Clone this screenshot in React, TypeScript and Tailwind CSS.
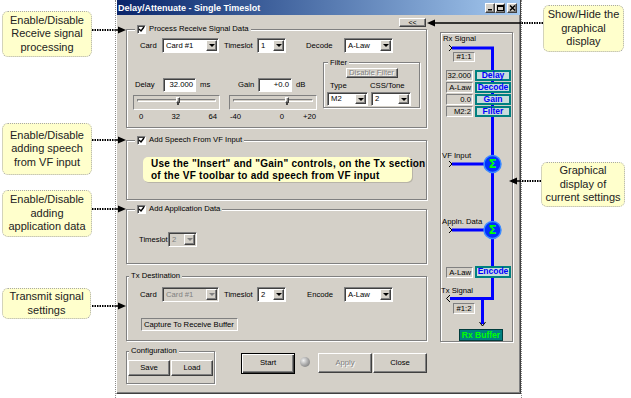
import React from "react";

// classic win2k bevels
const sunken = "border border-t-[#808080] border-l-[#808080] border-b-white border-r-white shadow-[inset_1px_1px_0_#404040]";
const raised = "border border-t-white border-l-white border-b-[#404040] border-r-[#404040] shadow-[inset_-1px_-1px_0_#808080]";
const etched = "border border-[#808080] shadow-[inset_1px_1px_0_#fff,1px_1px_0_#fff]";
const flat = "border border-t-[#808080] border-l-[#808080] border-b-white border-r-white";
const dis = "text-[#808080] [text-shadow:1px_1px_0_#fff]";

function Check() {
  return (
    <span className={`inline-flex w-[9px] h-[9px] bg-white ${sunken} items-center justify-center shrink-0`}>
      <svg width="7" height="7" viewBox="0 0 7 7">
        <path d="M1 3 L3 5 L6 1" fill="none" stroke="#000" strokeWidth="1.4" />
      </svg>
    </span>
  );
}

interface SelectProps {
  value: string;
  w: string;
  h?: string;
  disabled?: boolean;
}

function Select({ value, w, h = "h-[15px]", disabled = false }: SelectProps) {
  return (
    <div className={`flex ${w} ${h} ${sunken} ${disabled ? "bg-[#d4d0c8]" : "bg-white"} p-[1px] shrink-0`}>
      <span className={`flex-1 pl-[2px] flex items-center whitespace-nowrap ${disabled ? "text-[#808080]" : ""}`}>
        {value}
      </span>
      <span className={`w-[11px] flex items-center justify-center bg-[#d4d0c8] ${raised}`}>
        <span
          className={`w-0 h-0 border-x-[3px] border-x-transparent border-t-[3px] ${
            disabled ? "border-t-[#808080]" : "border-t-black"
          }`}
        />
      </span>
    </div>
  );
}

function Slider({ pos }: { pos: number }) {
  return (
    <div className={`relative h-[15px] mt-[3px] ${flat}`}>
      <div className="mx-[3px] mt-[3px] h-[3px] border-t border-l border-[#808080] border-b border-b-white border-r border-r-white bg-[#d4d0c8]" />
      {/* thumb */}
      <div className="absolute top-[1px] w-[4px] h-[8px]" style={{ left: pos - 3 }}>
        <div className={`w-[4px] h-[6px] bg-[#d4d0c8] ${raised}`} />
        <div className="ml-[1px] w-[2px] h-[2px] bg-[#404040]" />
      </div>
    </div>
  );
}

interface GroupProps {
  legend: string;
  check?: boolean;
  legendMl?: string;
  className?: string;
  children?: React.ReactNode;
}

function Group({ legend, check = false, legendMl = "ml-[8px]", className = "", children }: GroupProps) {
  return (
    <fieldset className={`${etched} ${className}`}>
      <legend className={`${legendMl} px-[2px] h-[10px] flex items-center gap-[3px] bg-[#d4d0c8]`}>
        {check && <Check />}
        <span className="leading-[10px] whitespace-nowrap">{legend}</span>
      </legend>
      {children}
    </fieldset>
  );
}

function TitleButton({ kind, className = "" }: { kind: "min" | "max" | "close"; className?: string }) {
  return (
    <span className={`w-[10px] h-[10px] bg-[#d4d0c8] ${raised} flex items-center justify-center ${className}`}>
      <svg width="7" height="6" viewBox="0 0 7 6">
        {kind === "min" && <rect x="1" y="4" width="4" height="1.5" fill="#000" />}
        {kind === "max" && (
          <>
            <rect x="0.5" y="0.5" width="6" height="5" fill="none" stroke="#000" strokeWidth="1" />
            <rect x="0.5" y="0.5" width="6" height="1.5" fill="#000" />
          </>
        )}
        {kind === "close" && <path d="M1 0.5 L6 5.5 M6 0.5 L1 5.5" stroke="#000" strokeWidth="1.5" />}
      </svg>
    </span>
  );
}

function Diagram() {
  const valBox = `absolute left-[5px] w-[27px] h-[11px] ${flat} text-right pr-[1px] leading-[9px]`;
  const lblBox =
    "absolute left-[34px] w-[36px] h-[11px] border-2 border-[#008080] bg-[#c8dcdc] text-[#0000ff] font-bold text-[8.5px] leading-[7px] text-center";
  return (
    <div className={`relative w-[73px] h-[310px] ${etched}`}>
      <svg className="absolute left-0 top-0" width="71" height="308" viewBox="0 0 71 308">
        <path d="M11 15 H51.5 V265.5 H9" fill="none" stroke="#0000ff" strokeWidth="3" />
        <path d="M41.5 265.5 V291" fill="none" stroke="#0000ff" strokeWidth="3" />
        <path d="M11 131 H51.5 M11 197 H51.5" fill="none" stroke="#0000ff" strokeWidth="3" />
        <path
          d="M8 12 L11 15 L8 18 M8 128 L11 131 L8 134 M8 194 L11 197 L8 200 M9 262 L5.5 265.5 L9 269 M38.5 289 L41.5 293 L44.5 289"
          fill="none"
          stroke="#000"
          strokeWidth="1"
        />
        {[131, 197].map((cy) => (
          <g key={cy}>
            <circle cx="51.5" cy={cy} r="8.5" fill="#0030ff" stroke="#3c8cff" strokeWidth="1.5" />
            <text x="51.5" y={cy + 4} textAnchor="middle" fontSize="12" fontWeight="bold" fill="#00ff00" fontFamily="'DejaVu Sans', sans-serif">
              Σ
            </text>
          </g>
        ))}
      </svg>
      <span className="absolute left-[2px] top-[1px] leading-[10px]">Rx Signal</span>
      <span className={`absolute left-[12px] top-[19px] w-[22px] h-[10px] ${flat} text-center leading-[8px]`}>#1:1</span>
      <span className={`${valBox} top-[37px]`}>32.000</span>
      <span className={`${valBox} top-[49px]`}>A-Law</span>
      <span className={`${valBox} top-[61px]`}>0.0</span>
      <span className={`${valBox} top-[73px]`}>M2:2</span>
      <span className={`${lblBox} top-[37px]`}>Delay</span>
      <span className={`${lblBox} top-[49px]`}>Decode</span>
      <span className={`${lblBox} top-[61px]`}>Gain</span>
      <span className={`${lblBox} top-[73px]`}>Filter</span>
      <span className="absolute left-[1px] top-[118px] leading-[10px] whitespace-nowrap">VF Input</span>
      <span className="absolute left-[1px] top-[184px] leading-[10px] whitespace-nowrap">Appln. Data</span>
      <span className={`${valBox} top-[234px]`}>A-Law</span>
      <span className={`${lblBox} top-[233px] h-[12px]`}>Encode</span>
      <span className="absolute left-[0px] top-[253px] leading-[10px] whitespace-nowrap">Tx Signal</span>
      <span className={`absolute left-[12px] top-[270px] w-[22px] h-[11px] ${flat} text-center leading-[9px]`}>#1:2</span>
      <span className="absolute left-[18px] top-[296px] w-[44px] h-[12px] bg-[#008080] border border-[#003c3c] text-[#00ff00] font-bold text-[8.5px] leading-[10px] text-center">
        Rx Buffer
      </span>
    </div>
  );
}

function Dialog() {
  return (
    <div className="w-[405px] h-[394px] bg-[#d4d0c8] border-l border-l-white border-r border-r-[#404040] border-b border-b-[#404040] shadow-[inset_-1px_-1px_0_#808080] text-[7.7px] leading-[10px]">
      {/* title bar */}
      <div className="h-[15px] flex items-center bg-linear-to-r from-[#0a246a] to-[#a6caf0] pl-[1px] pr-[3px]">
        <span className="text-white font-bold text-[9px] whitespace-nowrap">Delay/Attenuate - Single Timeslot</span>
        <div className="ml-auto flex">
          <TitleButton kind="min" />
          <TitleButton kind="max" />
          <TitleButton kind="close" className="ml-[2px]" />
        </div>
      </div>

      <div className="flex pl-[9px]">
        {/* left column */}
        <div className="w-[301px] flex flex-col">
          <div className="flex justify-end mt-[3px] pr-[1px]">
            <div className={`w-[27px] h-[9px] ${raised} text-[7px] leading-[7px] text-center`}>&lt;&lt;</div>
          </div>

          <Group legend="Process Receive Signal Data" check className="-mt-[3px] h-[104px]">
            <div className="flex items-center mt-[4px] pl-[13px] h-[15px]">
              <span className="w-[22px]">Card</span>
              <Select value="Card #1" w="w-[57px]" />
              <span className="ml-[5px] w-[33px]">Timeslot</span>
              <Select value="1" w="w-[29px]" />
              <span className="ml-[20px] w-[38px]">Decode</span>
              <Select value="A-Law" w="w-[49px]" />
            </div>
            <div className="flex items-start mt-[5px] pl-[6px]">
              <div className="w-[87px] mt-[20px] shrink-0">
                <div className="flex items-center h-[14px]">
                  <span className="w-[30px] pl-[2px]">Delay</span>
                  <div className={`w-[33px] h-[14px] bg-white ${sunken} text-right pr-[2px] leading-[12px]`}>32.000</div>
                  <span className="ml-[4px]">ms</span>
                </div>
                <Slider pos={45} />
                <div className="flex justify-between pl-[6px] pr-[3px] mt-[2px]">
                  <span>0</span>
                  <span>32</span>
                  <span>64</span>
                </div>
              </div>
              <div className="w-[88px] ml-[9px] mt-[20px] shrink-0">
                <div className="flex items-center h-[14px]">
                  <span className="w-[29px] pl-[9px]">Gain</span>
                  <div className={`w-[34px] h-[14px] bg-white ${sunken} text-right pr-[2px] leading-[12px]`}>+0.0</div>
                  <span className="ml-[4px]">dB</span>
                </div>
                <Slider pos={58} />
                <div className="flex pl-[1px] pr-[1px] mt-[2px]">
                  <span>-40</span>
                  <span className="ml-auto mr-[19px]">0</span>
                  <span>+20</span>
                </div>
              </div>
              <fieldset className={`${etched} w-[97px] h-[50px] ml-[6px] shrink-0`}>
                <legend className="ml-[4px] px-[2px] h-[9px] leading-[9px] bg-[#d4d0c8]">Filter</legend>
                <div className={`mx-auto mt-[1px] w-[52px] h-[10px] ${raised} ${dis} text-center leading-[8px] whitespace-nowrap`}>
                  Disable Filter
                </div>
                <div className="flex mt-[3px] leading-[9px] pl-[6px]">
                  <span className="w-[40px]">Type</span>
                  <span>CSS/Tone</span>
                </div>
                <div className="flex mt-[2px] pl-[3px] gap-[3px]">
                  <Select value="M2" w="w-[41px]" h="h-[14px]" />
                  <Select value="2" w="w-[40px]" h="h-[14px]" />
                </div>
              </fieldset>
            </div>
          </Group>

          <Group legend="Add Speech From VF Input" check className="mt-[7px] h-[65px]">
            <div className="mt-[12px] ml-[16px] w-[269px] h-[25px] rounded-[5px] bg-[#ffffcc] shadow-[1px_1px_0_#b8b4a8] pl-[8px] py-[1px] font-bold text-[10px] leading-[12px] tracking-[0.25px] whitespace-nowrap">
              Use the "Insert" and "Gain" controls, on the Tx section
              <br />
              of the VF toolbar to add speech from VF input
            </div>
          </Group>

          <Group legend="Add Application Data" check className="mt-[4px] h-[60px]">
            <div className="flex items-center mt-[18px] pl-[12px]">
              <span className="w-[29px]">Timeslot</span>
              <Select value="2" w="w-[29px]" disabled />
            </div>
          </Group>

          <Group legend="Tx Destination" legendMl="ml-[2px]" className="mt-[7px] h-[70px]">
            <div className="flex items-center mt-[6px] pl-[13px] h-[15px]">
              <span className="w-[22px]">Card</span>
              <Select value="Card #1" w="w-[57px]" disabled />
              <span className="ml-[5px] w-[33px]">Timeslot</span>
              <Select value="2" w="w-[29px]" />
              <span className="ml-[21px] w-[37px]">Encode</span>
              <Select value="A-Law" w="w-[49px]" />
            </div>
            <div className={`mt-[16px] ml-[14px] w-[97px] h-[13px] ${flat} pl-[2px] leading-[11px] whitespace-nowrap`}>
              Capture To Receive Buffer
            </div>
          </Group>

          <div className="flex items-start mt-[5px]">
            <Group legend="Configuration" legendMl="ml-[2px]" className="w-[89px] h-[38px] shrink-0">
              <div className="flex mt-[4px] pl-[1px] gap-[1px]">
                <div className={`w-[42px] h-[16px] ${raised} text-center leading-[14px]`}>Save</div>
                <div className={`w-[42px] h-[16px] ${raised} text-center leading-[14px]`}>Load</div>
              </div>
            </Group>
            <div className="ml-[26px] mt-[7px] w-[54px] h-[21px] border border-black shadow-[inset_1px_1px_0_#fff,inset_-1px_-1px_0_#404040,inset_-2px_-2px_0_#808080] text-center leading-[18px]">
              Start
            </div>
            <div className="ml-[5px] mt-[11px] w-[10px] h-[10px] rounded-full bg-[radial-gradient(circle_at_35%_35%,#f0f0f0,#a0a0a0_55%,#707070)]" />
            <div className={`ml-[8px] mt-[7px] w-[54px] h-[20px] ${raised} ${dis} text-center leading-[18px]`}>Apply</div>
            <div className={`ml-[1px] mt-[7px] w-[54px] h-[20px] ${raised} text-center leading-[18px]`}>Close</div>
          </div>
        </div>

        {/* graphical display */}
        <div className="ml-[13px] mt-[17px]">
          <Diagram />
        </div>
      </div>
    </div>
  );
}

const callout =
  "absolute flex items-center justify-center text-center text-[11px] leading-[13.5px] text-[#222] bg-[#ffffcc] border border-dotted border-[#a8a8a8] rounded-[6px]";

export default function App() {
  const left = [30, 140, 209, 306];
  return (
    <div className="relative w-[631px] h-[398px] bg-white overflow-hidden font-['Liberation_Sans',Arial,sans-serif] text-black">
      <div className="ml-[115px] w-[407px] h-[398px] border-x border-dotted border-[#8a8a8a]">
        <Dialog />
      </div>

      <div className={`${callout} left-[2px] top-[11px] w-[90px] h-[46px]`}>
        Enable/Disable
        <br />
        Receive signal
        <br />
        processing
      </div>
      <div className={`${callout} left-[2px] top-[123px] w-[90px] h-[52px]`}>
        Enable/Disable
        <br />
        adding speech
        <br />
        from VF input
      </div>
      <div className={`${callout} left-[2px] top-[190px] w-[90px] h-[47px]`}>
        Enable/Disable
        <br />
        adding
        <br />
        application data
      </div>
      <div className={`${callout} left-[2px] top-[288px] w-[89px] h-[31px]`}>
        Transmit signal
        <br />
        settings
      </div>
      <div className={`${callout} left-[543px] top-[5px] w-[81px] h-[47px]`}>
        Show/Hide the
        <br />
        graphical
        <br />
        display
      </div>
      <div className={`${callout} left-[541px] top-[162px] w-[84px] h-[45px]`}>
        Graphical
        <br />
        display of
        <br />
        current settings
      </div>

      {/* callout arrows */}
      <svg className="absolute left-0 top-0 pointer-events-none" width="631" height="398" viewBox="0 0 631 398">
        {left.map((y) => (
          <g key={y}>
            <line x1="92" y1={y} x2="115" y2={y} stroke="#000" strokeWidth="2" strokeDasharray="1.5 1" />
            <line x1="115" y1={y} x2="120" y2={y} stroke="#000" strokeWidth="1.5" />
            <polygon points={`126,${y} 118,${y - 3.5} 118,${y + 3.5}`} fill="#000" />
          </g>
        ))}
        <line x1="543" y1="23" x2="521" y2="23" stroke="#000" strokeWidth="2" strokeDasharray="1.5 1" />
        <line x1="521" y1="23" x2="433" y2="23" stroke="#000" strokeWidth="1.5" />
        <polygon points="427,23 435,19.5 435,26.5" fill="#000" />
        <line x1="541" y1="181" x2="521" y2="181" stroke="#000" strokeWidth="2" strokeDasharray="1.5 1" />
        <line x1="521" y1="181" x2="516" y2="181" stroke="#000" strokeWidth="1.5" />
        <polygon points="509,181 517,177.5 517,184.5" fill="#000" />
      </svg>
    </div>
  );
}
